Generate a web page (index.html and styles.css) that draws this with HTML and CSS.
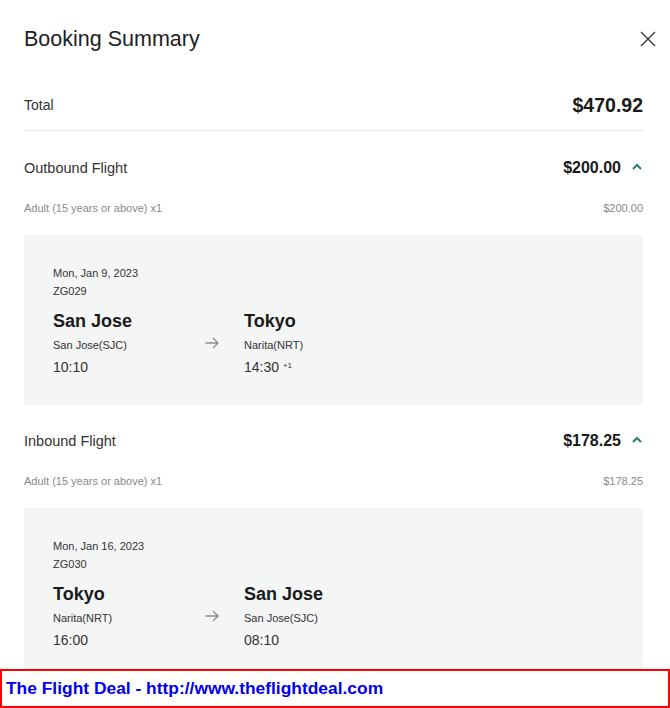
FILE: index.html
```html
<!DOCTYPE html>
<html lang="en">
<head>
<meta charset="utf-8">
<title>Booking Summary</title>
<link rel="stylesheet" href="styles.css">
</head>
<body>
<div class="panel">
  <div class="header">
    <h1 class="title">Booking Summary</h1>
    <svg class="close" width="16" height="16" viewBox="0 0 16 16" aria-label="Close"><path d="M1 1 L15 15 M15 1 L1 15" stroke="#333" stroke-width="1.4" fill="none"/></svg>
  </div>

  <div class="total">
    <span class="total-label">Total</span>
    <span class="total-price">$470.92</span>
  </div>

  <div class="section-head">
    <span class="section-label">Outbound Flight</span>
    <span class="section-price">$200.00<svg class="chev" width="10" height="7" viewBox="0 0 10 7"><polyline points="1,6 5,2 9,6" fill="none" stroke="#23806f" stroke-width="2"/></svg></span>
  </div>
  <div class="pax">
    <span>Adult (15 years or above) x1</span>
    <span>$200.00</span>
  </div>
  <div class="card">
    <div class="date">Mon, Jan 9, 2023</div>
    <div class="code">ZG029</div>
    <div class="route">
      <div class="city">San Jose</div>
      <div class="arrow"><svg width="14" height="12" viewBox="0 0 14 12"><path d="M0.5 6 H13 M8 1 L13 6 L8 11" fill="none" stroke="#8a8a8a" stroke-width="1.3"/></svg></div>
      <div class="city">Tokyo</div>
      <div class="airport">San Jose(SJC)</div>
      <div class="airport">Narita(NRT)</div>
      <div class="time">10:10</div>
      <div class="time">14:30 <sup class="plus">+1</sup></div>
    </div>
  </div>

  <div class="section-head">
    <span class="section-label">Inbound Flight</span>
    <span class="section-price">$178.25<svg class="chev" width="10" height="7" viewBox="0 0 10 7"><polyline points="1,6 5,2 9,6" fill="none" stroke="#23806f" stroke-width="2"/></svg></span>
  </div>
  <div class="pax">
    <span>Adult (15 years or above) x1</span>
    <span>$178.25</span>
  </div>
  <div class="card">
    <div class="date">Mon, Jan 16, 2023</div>
    <div class="code">ZG030</div>
    <div class="route">
      <div class="city">Tokyo</div>
      <div class="arrow"><svg width="14" height="12" viewBox="0 0 14 12"><path d="M0.5 6 H13 M8 1 L13 6 L8 11" fill="none" stroke="#8a8a8a" stroke-width="1.3"/></svg></div>
      <div class="city">San Jose</div>
      <div class="airport">Narita(NRT)</div>
      <div class="airport">San Jose(SJC)</div>
      <div class="time">16:00</div>
      <div class="time">08:10</div>
    </div>
  </div>
</div>

<div class="banner">The Flight Deal - http://www.theflightdeal.com</div>
</body>
</html>
```
FILE: styles.css
```css
* { box-sizing: border-box; }

html, body {
  margin: 0;
  padding: 0;
  background: #fff;
}

body {
  font-family: "Liberation Sans", Arial, sans-serif;
  color: #222;
  overflow: hidden;
  height: 708px;
}

.panel {
  padding: 0 27px 0 24px;
}

.header {
  display: flex;
  justify-content: space-between;
  align-items: center;
  padding-top: 26px;
}

.title {
  margin: 0;
  font-size: 21.5px;
  font-weight: normal;
  line-height: 26px;
  color: #222;
}

.close {
  display: block;
  margin-right: -13px;
  margin-top: -1px;
}

.total {
  display: flex;
  justify-content: space-between;
  align-items: center;
  height: 51px;
  margin-top: 28px;
  border-bottom: 1px solid #e3ebea;
}

.total-label {
  font-size: 14px;
  color: #333;
}

.total-price {
  font-size: 19.5px;
  font-weight: bold;
  color: #1a1a1a;
}

.section-head {
  display: flex;
  justify-content: space-between;
  align-items: center;
  height: 24px;
  margin-top: 25px;
}

.card + .section-head {
  margin-top: 24px;
}

.section-label {
  font-size: 14.5px;
  color: #333;
}

.section-price {
  display: flex;
  align-items: center;
  font-size: 16px;
  font-weight: bold;
  color: #1a1a1a;
}

.chev {
  display: block;
  margin-left: 11px;
  margin-right: 1px;
  margin-top: -3px;
}

.pax {
  display: flex;
  justify-content: space-between;
  align-items: center;
  height: 16px;
  margin-top: 20px;
  font-size: 11px;
  color: #888;
}

.card {
  margin-top: 19px;
  background: #f4f5f5;
  padding: 29px 29px 29px 29px;
}

.date,
.code {
  font-size: 11px;
  line-height: 18px;
  color: #333;
}

.route {
  display: grid;
  grid-template-columns: 152px 39px 1fr;
  margin-top: 9px;
}

.city {
  font-size: 18px;
  font-weight: bold;
  line-height: 24px;
  color: #1a1a1a;
}

.arrow {
  grid-row: 1 / span 3;
  grid-column: 2;
  align-self: center;
  padding-top: 1px;
}

.arrow svg {
  display: block;
}

.route .city:nth-child(3),
.route .airport:nth-child(5),
.route .time:nth-child(7) {
  grid-column: 3;
}

.airport {
  font-size: 11px;
  line-height: 16px;
  margin-top: 4px;
  color: #333;
}

.time {
  font-size: 14px;
  line-height: 18px;
  margin-top: 5px;
  color: #333;
}

.plus {
  font-size: 8px;
  vertical-align: 4px;
  line-height: 0;
}

.banner {
  position: fixed;
  left: 0;
  bottom: 0;
  width: 670px;
  height: 39px;
  border: 2px solid #ff0000;
  background: #fff;
  padding-left: 4px;
  display: flex;
  align-items: center;
  font-size: 17.4px;
  font-weight: bold;
  color: #0000ee;
}
```
